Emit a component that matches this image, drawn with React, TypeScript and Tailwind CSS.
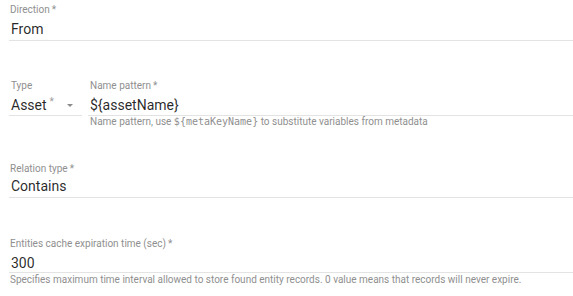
import React from "react";

function Label({ children }: { children: React.ReactNode }) {
  return (
    <div className="text-[10px] leading-[12px] text-[#8f8f8f] whitespace-nowrap">
      {children}
      <span className="ml-[2px]">*</span>
    </div>
  );
}

export default function App() {
  return (
    <div className="w-[573px] h-[296px] bg-white pl-[9px] overflow-hidden font-['Roboto',sans-serif] text-[rgba(0,0,0,0.85)]">
      {/* Direction */}
      <div className="pt-[4px]">
        <div className="pl-[1px]">
          <Label>Direction</Label>
        </div>
        <div className="mt-[4px] pl-[2px] pb-[2px] text-[14px] leading-[18px] border-b border-[#e3e3e3]">
          From
        </div>
      </div>

      {/* Type + Name pattern */}
      <div className="mt-[39px] flex gap-[6px]">
        <div className="w-[73px]">
          <div className="pl-[2px] text-[10px] leading-[12px] text-[#8f8f8f]">Type</div>
          <div className="mt-[4px] pl-[2px] pb-[1px] flex items-center text-[14px] leading-[18px] border-b border-[#e3e3e3]">
            <span>Asset</span>
            <span className="ml-[3px] text-[10px] text-[#a0a0a0] self-start leading-[12px]">*</span>
            <span className="ml-auto mr-[9px] w-0 h-0 border-l-[3px] border-r-[3px] border-t-[3px] border-l-transparent border-r-transparent border-t-[#8a8a8a]" />
          </div>
        </div>
        <div className="flex-1">
          <div className="pl-[2px]">
            <Label>Name pattern</Label>
          </div>
          <div className="mt-[4px] pl-[2px] pb-[1px] text-[14px] leading-[18px] border-b border-[#e3e3e3]">
            {"${assetName}"}
          </div>
          <div className="pl-[2px] text-[10px] leading-[12px] text-[#8f8f8f] whitespace-nowrap">
            Name pattern, use{" "}
            <span className="font-['DejaVu_Sans_Mono',monospace]">{"${metaKeyName}"}</span> to substitute variables from metadata
          </div>
        </div>
      </div>

      {/* Relation type */}
      <div className="mt-[35px]">
        <div className="pl-[1px]">
          <Label>Relation type</Label>
        </div>
        <div className="mt-[2px] pl-[2px] pb-[2px] text-[14px] leading-[18px] border-b border-[#e3e3e3]">
          Contains
        </div>
      </div>

      {/* Cache */}
      <div className="mt-[40px]">
        <div className="pl-[1px]">
          <Label>Entities cache expiration time (sec)</Label>
        </div>
        <div className="mt-[4px] pl-[2px] text-[14px] leading-[18px] border-b border-[#e3e3e3]">
          300
        </div>
        <div className="mt-[1px] pl-[1px] text-[10px] leading-[12px] text-[#8f8f8f] whitespace-nowrap">
          Specifies maximum time interval allowed to store found entity records. 0 value means that records will never expire.
        </div>
      </div>
    </div>
  );
}
